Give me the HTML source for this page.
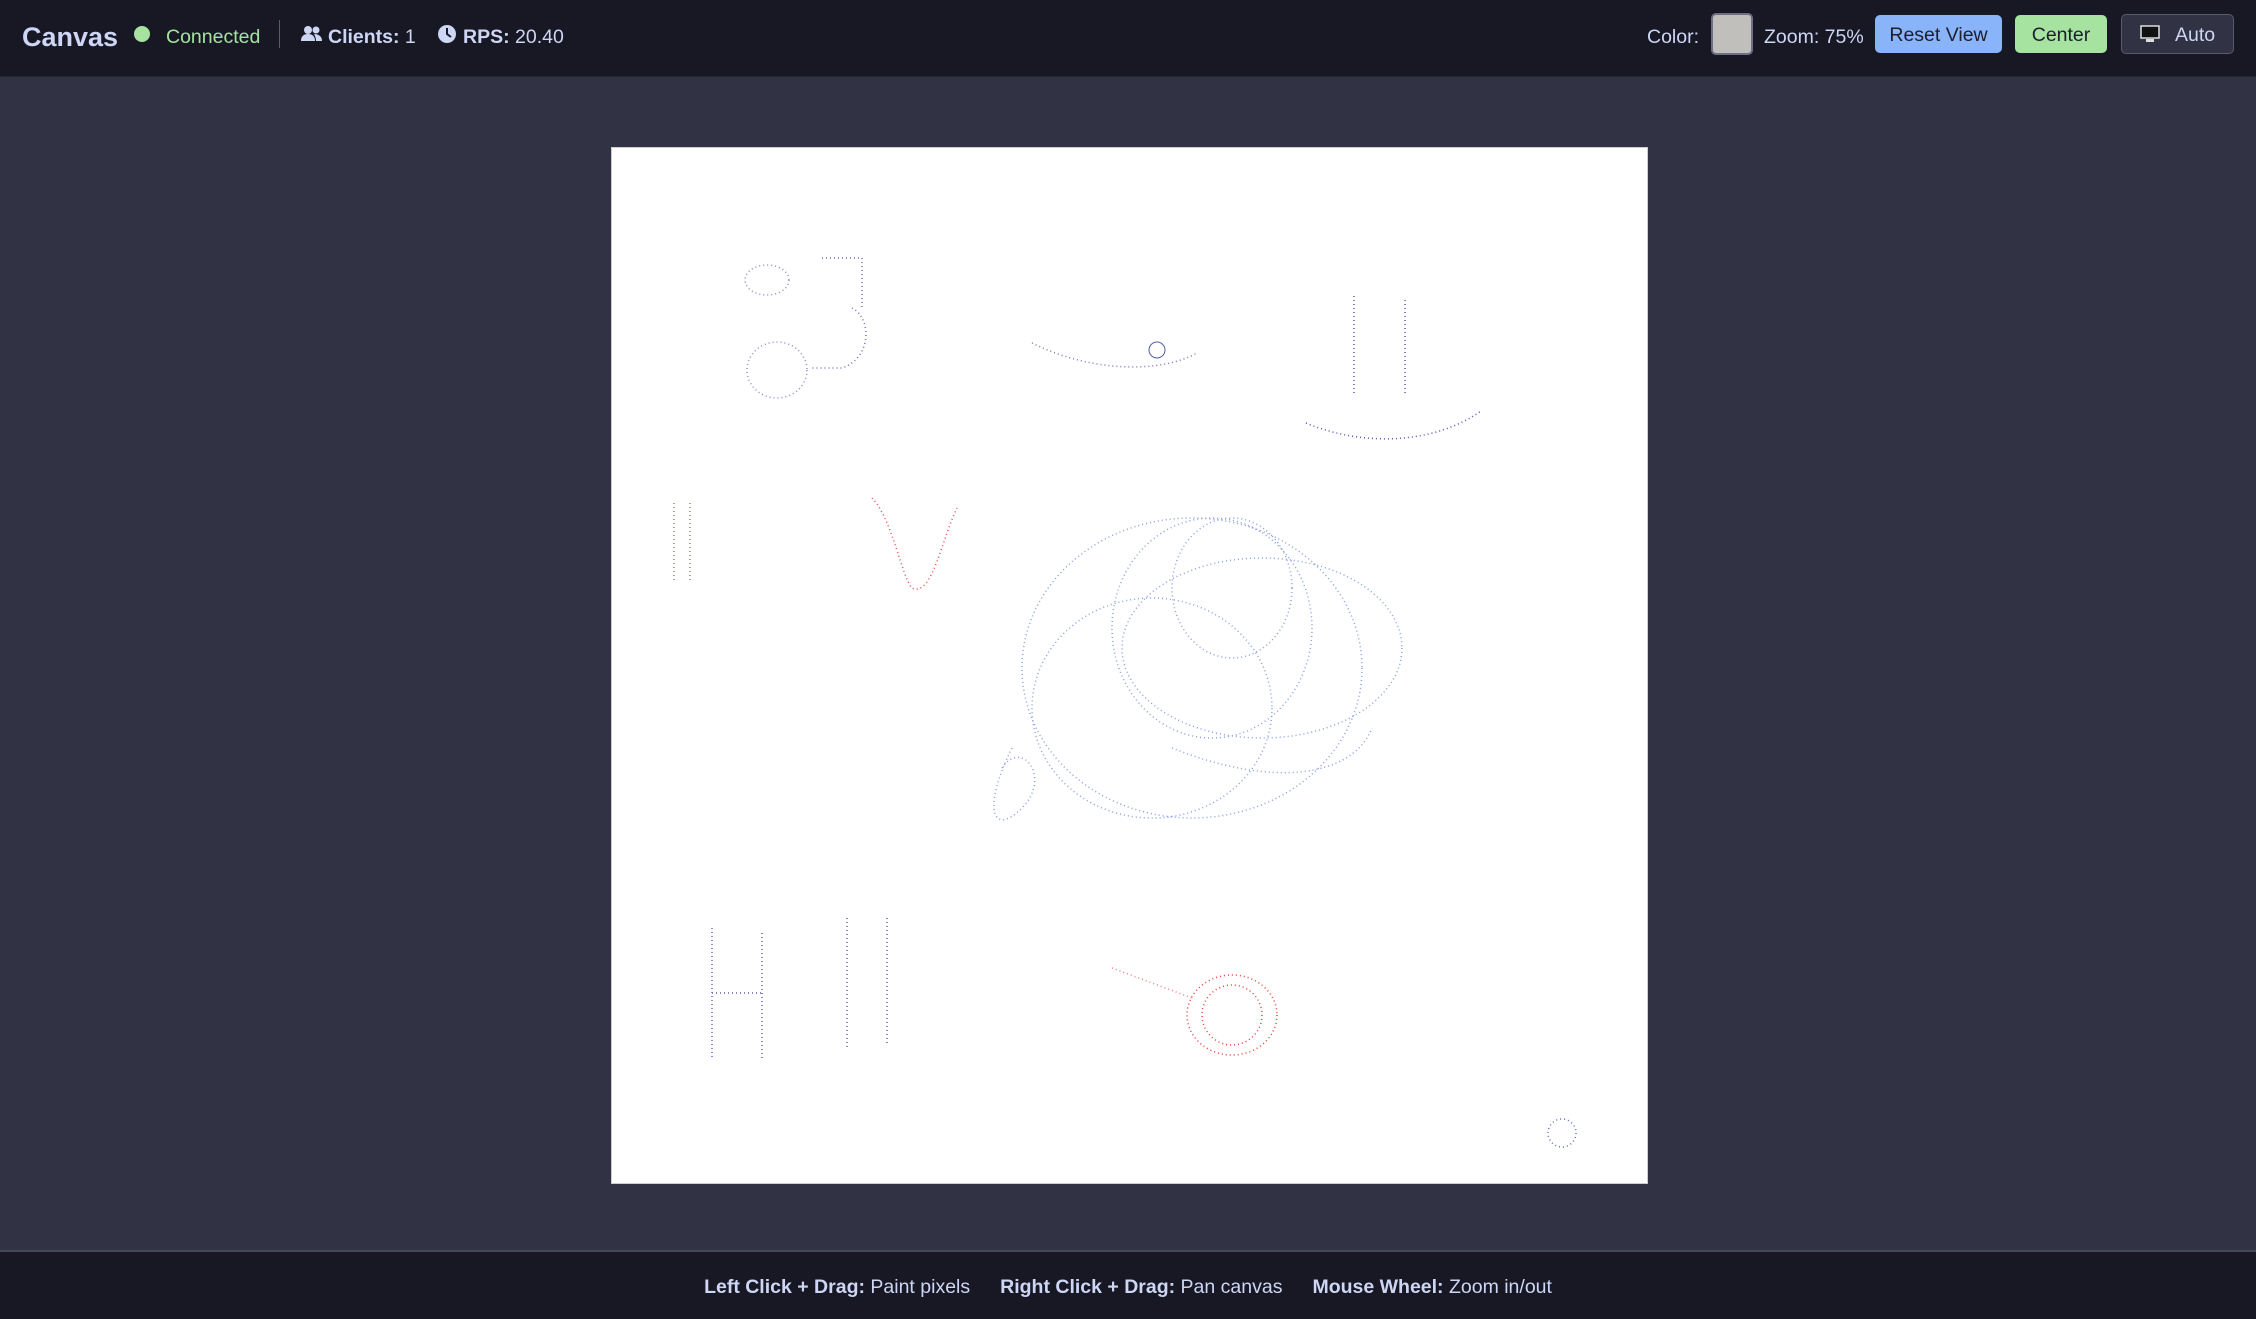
<!DOCTYPE html>
<html><head><meta charset="utf-8">
<style>
*{box-sizing:border-box;margin:0;padding:0}
html,body{width:2256px;height:1319px;overflow:hidden;background:#313244;font-family:"Liberation Sans",sans-serif;color:#cdd6f4}
#hdr{position:absolute;left:0;top:0;width:2256px;height:77px;background:#181825;border-bottom:1px solid #262637}
.t{position:absolute;top:2px;height:70px;line-height:70px;font-size:19.5px;white-space:nowrap}
#ftr{position:absolute;left:0;top:1250px;width:2256px;height:69px;background:#181825;border-top:2px solid #45475a;display:flex;justify-content:center;align-items:center;gap:30px;font-size:19.5px;padding-top:4px}
#ftr b{font-weight:bold}
.btn{position:absolute;border-radius:5px;font-size:19.5px;text-align:center}
#cv{position:absolute;left:611px;top:147px;width:1037px;height:1037px;background:#fff;border:1px solid #ccc}
</style></head><body>
<div id="hdr">
  <div class="t" style="left:22px;font-size:27px;font-weight:bold">Canvas</div>
  <div style="position:absolute;left:134px;top:26px;width:16px;height:16px;border-radius:50%;background:#a6e3a1"></div>
  <div class="t" style="left:166px;color:#a6e3a1">Connected</div>
  <div style="position:absolute;left:279px;top:20px;width:1px;height:28px;background:#585b70"></div>
  <svg style="position:absolute;left:301px;top:25px" width="22" height="18" viewBox="0 0 22 18"><circle cx="7" cy="5" r="4" fill="#cdd6f4"/><circle cx="15" cy="5" r="3.5" fill="#cdd6f4"/><path d="M0 16c0-5 3-7 7-7s7 2 7 7z M13 9c4 0 8 2 8 7h-6c0-3-1-5-2-7z" fill="#cdd6f4"/></svg>
  <div class="t" style="left:328px"><b>Clients:</b> 1</div>
  <svg style="position:absolute;left:437px;top:24px" width="20" height="20" viewBox="0 0 20 20"><circle cx="10" cy="10" r="9" fill="#cdd6f4"/><path d="M10 4v6l4 3" stroke="#181825" stroke-width="2" fill="none"/></svg>
  <div class="t" style="left:463px"><b>RPS:</b> 20.40</div>

  <div class="t" style="left:1647px">Color:</div>
  <div style="position:absolute;left:1711px;top:13px;width:42px;height:42px;border-radius:5px;background:#c0bfbb;border:2px solid #6c6f85"></div>
  <div class="t" style="left:1764px">Zoom: 75%</div>
  <div class="btn" style="left:1875px;top:15px;width:127px;height:38px;line-height:40px;background:#89b4fa;color:#1e1e2e">Reset View</div>
  <div class="btn" style="left:2015px;top:15px;width:92px;height:38px;line-height:40px;background:#a6e3a1;color:#1e1e2e">Center</div>
  <div class="btn" style="left:2121px;top:14px;width:113px;height:40px;line-height:40px;background:#313244;border:1px solid #585b70;color:#cdd6f4;padding-left:53px;text-align:left">Auto</div>
  <svg style="position:absolute;left:2140px;top:25px" width="20" height="19" viewBox="0 0 20 19"><rect x="1" y="1" width="18" height="12" fill="#111" stroke="#ddd" stroke-width="1.5"/><rect x="6" y="14" width="8" height="3" fill="#ddd"/></svg>
</div>

<div id="cv">
<svg width="1037" height="1037" viewBox="0 0 1037 1037" fill="none" stroke-dasharray="1 3" stroke-width="1.5">
 <ellipse cx="155" cy="132" rx="22" ry="15" stroke="#8a8cc8"/>
 <ellipse cx="165" cy="222" rx="30" ry="28" stroke="#8a8cc8"/>
 <path d="M210 110h40v50M240 160c20 10 20 50-10 60h-30" stroke="#7070b8"/>
 <path d="M420 195c60 30 130 30 165 10" stroke="#7a7ab8"/>
 <circle cx="545" cy="202" r="8" stroke="#5060a8" stroke-dasharray="none" stroke-width="1"/>
 <path d="M742 148v100M793 152v95M694 275c60 25 130 20 175-12" stroke="#6050b0"/>
 <path d="M260 350c20 20 30 80 40 90 20 10 30-50 45-80" stroke="#e85050"/>
 <path d="M62 355v80M78 355v80" stroke="#b08060"/>
 <g stroke="#8aa0d8">
  <ellipse cx="580" cy="520" rx="170" ry="150"/>
  <ellipse cx="600" cy="480" rx="100" ry="110"/>
  <ellipse cx="620" cy="440" rx="60" ry="70"/>
  <ellipse cx="540" cy="560" rx="120" ry="110"/>
  <ellipse cx="650" cy="500" rx="140" ry="90"/>
  <path d="M400 600c-30 60-20 90 10 60s0-70-20-40M560 600c100 40 180 30 200-20"/>
 </g>
 <path d="M100 780v130M150 785v125M100 845h50M235 770v130M275 770v125" stroke="#6a5ab0"/>
 <path d="M500 820l80 30" stroke="#f08080"/>
 <ellipse cx="620" cy="867" rx="45" ry="40" stroke="#e84040"/>
 <ellipse cx="620" cy="867" rx="30" ry="30" stroke="#e84040"/>
 <circle cx="950" cy="985" r="14" stroke="#5a70b0"/>
</svg>
</div>

<div id="ftr">
  <span><b>Left Click + Drag:</b> Paint pixels</span>
  <span><b>Right Click + Drag:</b> Pan canvas</span>
  <span><b>Mouse Wheel:</b> Zoom in/out</span>
</div>
</body></html>
